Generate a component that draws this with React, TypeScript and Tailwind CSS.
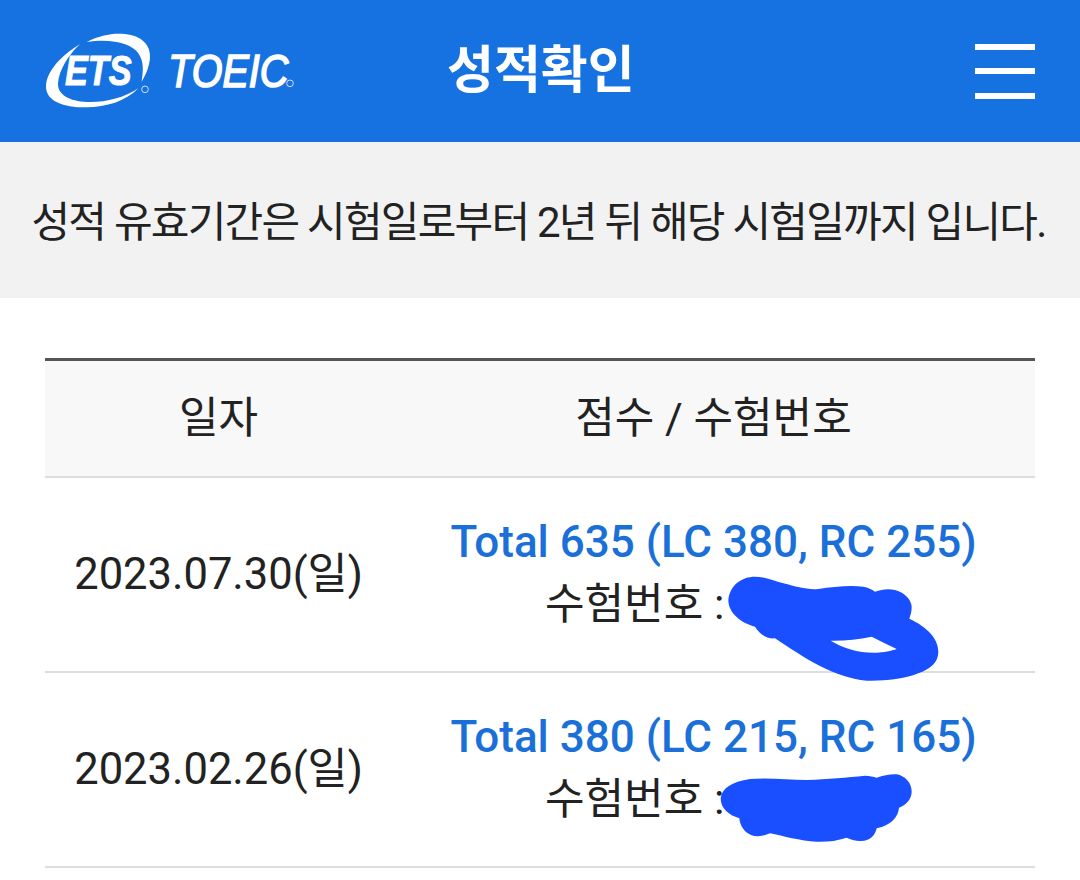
const font = "font-['Roboto','Noto_Sans_CJK_KR',sans-serif]";

function Logo() {
  return (
    <svg width="290" height="100" viewBox="0 0 870 300" className="block shrink-0">
      <path d="M150 72 C95 105 48 155 48 200 C48 245 105 263 170 262 C230 261 285 245 325 205 C280 235 225 248 170 246 C120 244 82 225 84 190 C87 150 115 105 150 72 Z" fill="white" />
      <path d="M170 66 C210 45 250 38 285 42 C335 47 362 75 360 112 C358 140 350 160 335 185 C340 150 342 125 325 100 C305 72 250 55 170 66 Z" fill="white" />
      <text x="105" y="195" fontFamily="'Liberation Sans',sans-serif" fontStyle="italic" fontWeight="700" fontSize="128" fill="white" stroke="white" strokeWidth="3" textLength="200" lengthAdjust="spacingAndGlyphs">ETS</text>
      <text x="415" y="200" fontFamily="'Liberation Sans',sans-serif" fontStyle="italic" fontWeight="400" fontSize="140" fill="white" stroke="white" strokeWidth="5" textLength="360" lengthAdjust="spacingAndGlyphs">TOEIC</text>
      <circle cx="345" cy="208" r="10" fill="none" stroke="#cfe0f8" strokeWidth="3" />
      <circle cx="780" cy="190" r="10" fill="none" stroke="#cfe0f8" strokeWidth="3" />
    </svg>
  );
}

function ScribbleOne() {
  return (
    <svg width="260" height="120" viewBox="0 0 780 360" className="absolute left-[655px] top-[92px]">
      <path
        d="M85 90 C90 45 125 20 165 20 C195 20 220 32 250 40 C290 50 320 60 355 57 C400 50 450 45 490 50 C505 52 515 58 525 65 C545 58 565 55 585 60 C615 68 635 90 635 112 C635 125 632 135 628 146 C680 170 715 205 715 245 C715 275 695 295 655 310 C610 328 555 333 500 332 C450 328 405 310 360 288 C315 265 265 232 225 205 C205 208 180 195 165 170 C125 160 85 130 85 90 Z M392 212 C430 235 480 250 530 248 C550 247 575 243 590 237 C565 225 540 212 515 200 C475 208 430 213 392 212 Z"
        fill="#1a4fff"
        fillRule="evenodd"
      />
    </svg>
  );
}

function ScribbleTwo() {
  return (
    <svg width="240" height="100" viewBox="0 0 720 300" className="absolute left-[655px] top-[87px]">
      <path
        d="M62 115 C65 85 95 65 150 57 C210 52 265 60 320 60 C385 58 440 52 495 47 C510 47 520 50 530 53 C550 47 570 42 590 43 C615 48 635 68 635 95 C635 115 620 135 597 143 C595 170 575 195 530 205 C525 230 505 245 480 243 C465 242 452 238 440 233 C410 243 380 246 350 245 C300 243 250 228 210 220 C190 228 170 232 155 226 C135 218 120 200 118 175 C85 165 62 145 62 115 Z"
        fill="#1a4fff"
      />
    </svg>
  );
}

function Row({ date, score, scribble }: { date: string; score: string; scribble: React.ReactNode }) {
  return (
    <div className="relative flex h-[195px] items-center border-b-2 border-[#dddddd]">
      <div className="w-[347px] text-center text-[43.5px] text-[#222222]">{date}</div>
      <div className="flex-1 text-center">
        <div className="h-[60px] text-[44px] leading-[64px] font-medium text-[#1a70d8]">{score}</div>
        <div className="flex h-[70px] items-center pl-[153px] text-[43px] text-[#222222]">수험번호 :</div>
      </div>
      {scribble}
    </div>
  );
}

export default function App() {
  return (
    <div className={`h-[880px] w-[1080px] overflow-hidden bg-white ${font}`}>
      <header className="flex h-[142px] items-center bg-[#1672e0] pl-[30px] pr-[45px]">
        <div className="-mt-[2px]">
          <Logo />
        </div>
        <h1 className="ml-[127px] whitespace-nowrap text-[51px] font-bold text-white">성적확인</h1>
        <div className="ml-auto flex h-[55px] w-[60px] flex-col justify-between">
          <span className="h-[6px] bg-white" />
          <span className="h-[6px] bg-white" />
          <span className="h-[6px] bg-white" />
        </div>
      </header>
      <div className="flex h-[156px] items-center justify-center whitespace-nowrap bg-[#f2f2f2] pr-[3px] pt-[4px] text-[42px] tracking-[-1.75px] text-[#222222]">
        성적 유효기간은 시험일로부터 2년 뒤 해당 시험일까지 입니다.
      </div>
      <main className="mx-[45px] mt-[60px]">
        <div className="flex h-[120px] items-center border-y-2 border-t-[3px] border-t-[#555555] border-b-[#dddddd] bg-[#f8f8f8] text-[43px] text-[#222222]">
          <div className="w-[347px] text-center">일자</div>
          <div className="flex-1 text-center">점수 / 수험번호</div>
        </div>
        <Row date="2023.07.30(일)" score="Total 635 (LC 380, RC 255)" scribble={<ScribbleOne />} />
        <Row date="2023.02.26(일)" score="Total 380 (LC 215, RC 165)" scribble={<ScribbleTwo />} />
      </main>
    </div>
  );
}
